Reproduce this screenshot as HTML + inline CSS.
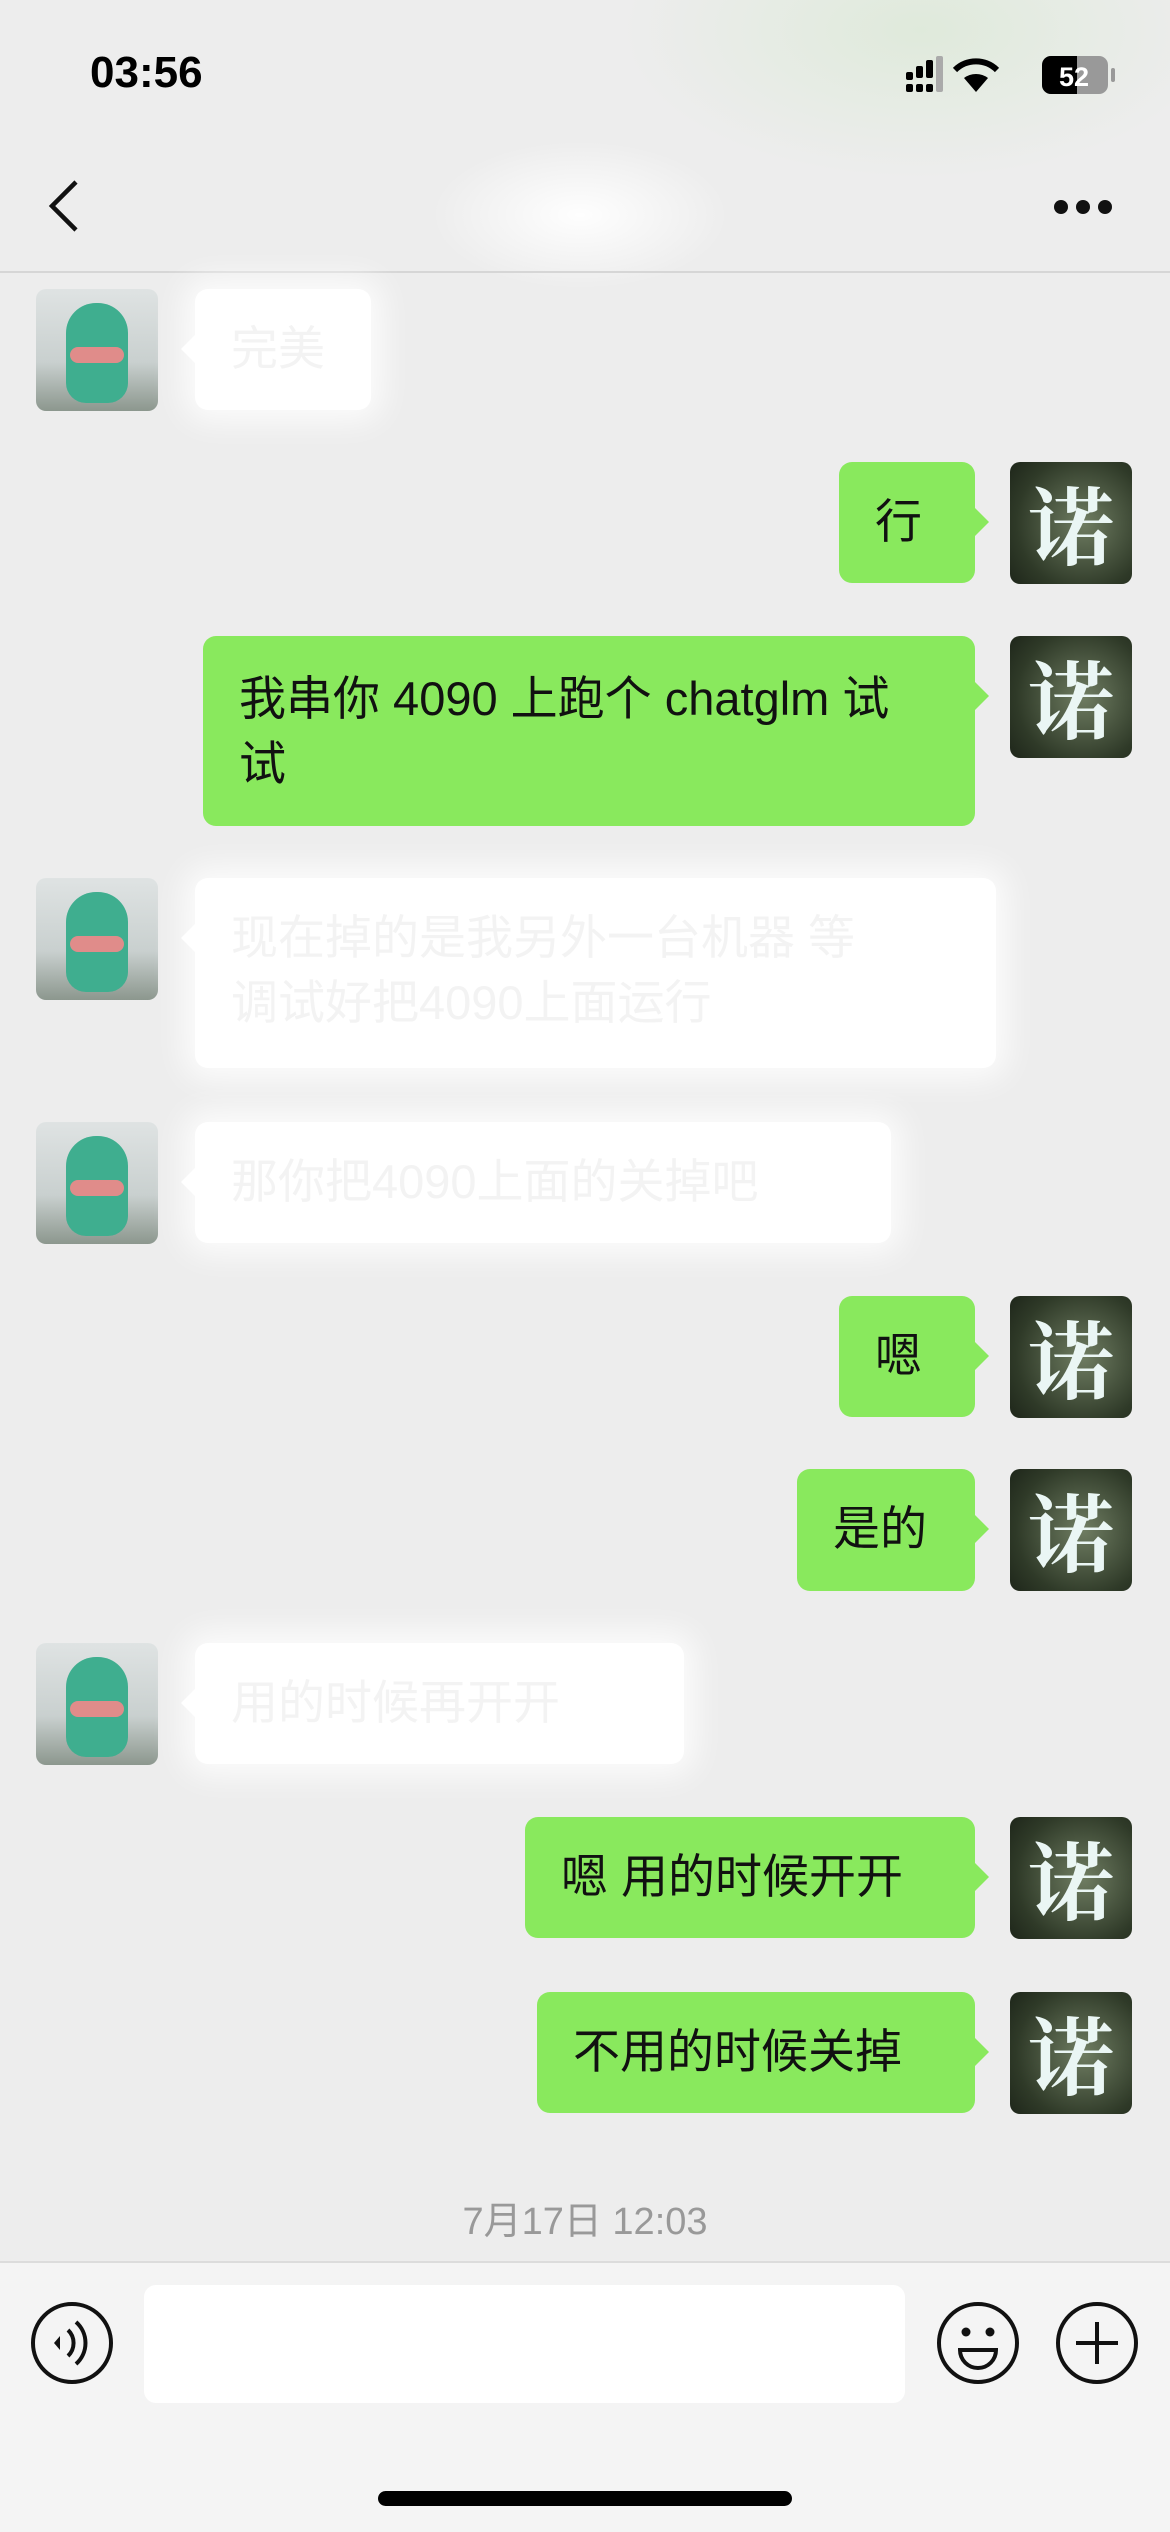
<!DOCTYPE html>
<html><head><meta charset="utf-8"><style>
*{margin:0;padding:0;box-sizing:border-box}
body{width:1170px;height:2532px;background:#ededed;font-family:"Liberation Sans","Noto Sans CJK SC",sans-serif;position:relative;overflow:hidden}
.abs{position:absolute}
.time{left:90px;top:48px;font-size:44px;font-weight:bold;color:#000}
.av{position:absolute;width:122px;height:122px;border-radius:10px;overflow:hidden}
.avl{left:36px;background:linear-gradient(#dfe3e3,#c9d0cf 60%,#8c978e);}
.avl:after{content:"";position:absolute;left:30px;top:14px;width:62px;height:100px;border-radius:30px 30px 20px 20px;background:#3fae8f}
.avl:before{content:"";position:absolute;left:34px;top:58px;width:54px;height:16px;border-radius:8px;background:#e08c8a;z-index:2}
.avr{left:1010px;background:radial-gradient(circle at 60% 50%,#6f7d62,#2f3a28 70%,#1e261a);color:#eaf6f4;font-size:86px;font-family:"Noto Serif CJK SC",serif;font-weight:bold;text-align:center;line-height:118px}
.b{position:absolute;border-radius:13px;font-size:47px;line-height:65px;padding:27px 36px;color:#111;white-space:nowrap}
.g{background:#89e95d}
.g:after{content:"";position:absolute;right:-14px;top:46px;border:14px solid transparent;border-right:0;border-left-color:#89e95d}
.w{background:#fff;color:#f3f3f3;box-shadow:0 0 30px 12px rgba(255,255,255,.8)}
.w:after{content:"";position:absolute;left:-14px;top:46px;border:14px solid transparent;border-left:0;border-right-color:#fff}
</style></head><body>
<div class="abs" style="left:620px;top:-120px;width:600px;height:300px;border-radius:50%;background:radial-gradient(#dfeadb,rgba(237,237,237,0) 70%)"></div>
<div class="abs time">03:56</div>
<svg class="abs" style="left:900px;top:52px" width="230" height="46" viewBox="0 0 230 46">
<g fill="#000"><rect x="6" y="20" width="7" height="8" rx="2"/><rect x="6" y="32" width="7" height="8" rx="2"/><rect x="16" y="14" width="7" height="12" rx="2"/><rect x="16" y="32" width="7" height="8" rx="2"/><rect x="26" y="8" width="7" height="18" rx="2"/><rect x="26" y="32" width="7" height="8" rx="2"/></g>
<rect x="36" y="4" width="7" height="36" rx="2" fill="#aaa"/>
<path d="M76 40 L64 26 A20 20 0 0 1 88 26 Z" fill="#000"/><path d="M55 18 A30 30 0 0 1 97 18" stroke="#000" stroke-width="6" fill="none"/>
<rect x="142" y="4" width="66" height="38" rx="9" fill="#999"/><path d="M151 4 h26 v38 h-26 a9 9 0 0 1 -9 -9 v-20 a9 9 0 0 1 9 -9z" fill="#000"/>
<text x="174" y="34" font-size="27" font-weight="bold" fill="#fff" text-anchor="middle" font-family="Liberation Sans">52</text>
<rect x="211" y="16" width="4" height="14" rx="2" fill="#999"/></svg>
<svg class="abs" style="left:44px;top:178px" width="40" height="56"><path d="M32 4 L8 28 L32 52" stroke="#111" stroke-width="4.5" fill="none"/></svg>
<div class="abs" style="left:430px;top:140px;width:300px;height:150px;border-radius:50%;background:radial-gradient(rgba(255,255,255,.95),rgba(255,255,255,0) 70%)"></div>
<svg class="abs" style="left:1050px;top:195px" width="70" height="24"><circle cx="11" cy="12" r="7" fill="#111"/><circle cx="33" cy="12" r="7" fill="#111"/><circle cx="55" cy="12" r="7" fill="#111"/></svg>
<div class="abs" style="left:0;top:271px;width:1170px;height:2px;background:#d6d6d6"></div>

<div class="av avl" style="top:289px"></div><div class="b w" style="left:195px;top:289px;width:176px;height:121px">完美</div>
<div class="b g" style="left:839px;top:462px;width:136px;height:121px">行</div><div class="av avr" style="top:462px">诺</div>
<div class="b g" style="left:203px;top:636px;width:772px;height:190px;padding-top:30px">我串你 4090 上跑个 chatglm 试<br>试</div><div class="av avr" style="top:636px">诺</div>
<div class="av avl" style="top:878px"></div><div class="b w" style="left:195px;top:878px;width:801px;height:190px">现在掉的是我另外一台机器 等<br>调试好把4090上面运行</div>
<div class="av avl" style="top:1122px"></div><div class="b w" style="left:195px;top:1122px;width:696px;height:121px">那你把4090上面的关掉吧</div>
<div class="b g" style="left:839px;top:1296px;width:136px;height:121px">嗯</div><div class="av avr" style="top:1296px">诺</div>
<div class="b g" style="left:797px;top:1469px;width:178px;height:122px">是的</div><div class="av avr" style="top:1469px">诺</div>
<div class="av avl" style="top:1643px"></div><div class="b w" style="left:195px;top:1643px;width:489px;height:121px">用的时候再开开</div>
<div class="b g" style="left:525px;top:1817px;width:450px;height:121px">嗯 用的时候开开</div><div class="av avr" style="top:1817px">诺</div>
<div class="b g" style="left:537px;top:1992px;width:438px;height:121px">不用的时候关掉</div><div class="av avr" style="top:1992px">诺</div>

<div class="abs" style="left:0;top:2190px;width:1170px;text-align:center;font-size:38px;color:#999">7月17日 12:03</div>
<div class="abs" style="left:0;top:2261px;width:1170px;height:271px;background:#f4f4f4;border-top:2px solid #dcdcdc"></div>
<div class="abs" style="left:144px;top:2285px;width:761px;height:118px;background:#fff;border-radius:12px"></div>
<svg class="abs" style="left:0;top:2290px" width="1170" height="110">
<g stroke="#111" stroke-width="4" fill="none"><circle cx="72" cy="53" r="39"/><circle cx="978" cy="53" r="39"/><circle cx="1097" cy="53" r="39"/>
<path d="M68 40 A18 18 0 0 1 68 66"/><path d="M76 32 A28 28 0 0 1 76 74"/><path d="M1097 32v42M1076 53h42"/>
<path d="M960 60h36a18 18 0 0 1 -36 0z"/></g>
<path d="M54 53 l6 -7 v14z" fill="#111"/><circle cx="966" cy="42" r="4.5" fill="#111"/><circle cx="990" cy="42" r="4.5" fill="#111"/></svg>
<div class="abs" style="left:378px;top:2491px;width:414px;height:15px;border-radius:8px;background:#000"></div>
</body></html>
